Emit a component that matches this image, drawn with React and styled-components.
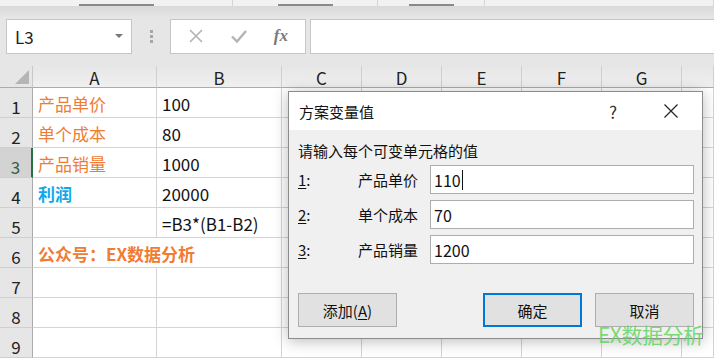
import React from 'react';
import styled, { createGlobalStyle } from 'styled-components';

const GlobalStyle = createGlobalStyle`
  html, body {
    margin: 0;
    padding: 0;
    background: #ffffff;
  }
  body {
    font-family: "Noto Sans CJK SC", "Noto Sans", sans-serif;
  }
`;

const Page = styled.div`
  position: relative;
  width: 714px;
  height: 358px;
  overflow: hidden;
  background: #ffffff;
  display: flex;
  flex-direction: column;
`;

const Ribbon = styled.div`
  height: 6px;
  background: #f3f2f1;
  display: flex;
`;

const RibbonGroup = styled.div`
  width: ${({ w }) => w}px;
  flex: none;
  display: flex;
  justify-content: center;
  align-items: flex-end;
  border-right: 1px solid #d6d6d6;
  box-sizing: border-box;
  span {
    width: ${({ bar }) => bar}px;
    height: 2px;
    background: #8a8a8a;
  }
`;

const FormulaBar = styled.div`
  height: 61px;
  box-sizing: border-box;
  background: linear-gradient(#d9d9d9, #e6e6e6 12px, #e6e6e6);
  padding: 13px 0 0 6px;
  display: flex;
  align-items: flex-start;
`;

const NameBox = styled.div`
  width: 126px;
  height: 35px;
  box-sizing: border-box;
  background: #fff;
  border: 1px solid #c6c6c6;
  display: flex;
  align-items: center;
  justify-content: space-between;
  padding: 0 8px 0 8px;
  font-size: 17px;
  color: #222;
`;

const Caret = styled.span`
  width: 0;
  height: 0;
  border-left: 4px solid transparent;
  border-right: 4px solid transparent;
  border-top: 4px solid #777;
`;

const Dots = styled.div`
  width: 38px;
  height: 35px;
  display: flex;
  flex-direction: column;
  align-items: center;
  justify-content: center;
  gap: 2px;
  span {
    width: 3px;
    height: 3px;
    background: #a6a6a6;
  }
`;

const FxBox = styled.div`
  width: 136px;
  height: 35px;
  box-sizing: border-box;
  background: #fff;
  border: 1px solid #c6c6c6;
  display: flex;
  align-items: center;
  justify-content: space-around;
  padding: 0 4px;
  color: #b0b0b0;
`;

const FxText = styled.span`
  font-family: "Liberation Serif", serif;
  font-style: italic;
  font-weight: bold;
  font-size: 17px;
  color: #7a7a7a;
`;

const FormulaInput = styled.div`
  flex: 1;
  margin-left: 4px;
  height: 35px;
  box-sizing: border-box;
  background: #fff;
  border: 1px solid #c6c6c6;
  border-right: none;
`;

const Sheet = styled.div`
  display: grid;
  grid-template-columns: 33px 124px 125px 80px 80px 80px 80px 80px 32px;
  grid-template-rows: 22px repeat(9, 30px);
`;

const Corner = styled.div`
  background: #e6e6e6;
  border-right: 1px solid #c8c8c8;
  border-bottom: 1px solid #ababab;
  position: relative;
  &::after {
    content: '';
    position: absolute;
    right: 3px;
    bottom: 3px;
    border-left: 14px solid transparent;
    border-bottom: 14px solid #b5b5b5;
  }
`;

const ColHead = styled.div`
  background: linear-gradient(#e6e6e6, #f0f0f0);
  border-right: 1px solid #cfcfcf;
  border-bottom: 1px solid #ababab;
  display: flex;
  align-items: center;
  justify-content: center;
  padding-top: 3px;
  font-size: 17px;
  line-height: 18px;
  color: #222;
`;

const RowHead = styled.div`
  background: ${({ active }) => (active ? '#d3d3d3' : '#e6e6e6')};
  border-right: ${({ active }) => (active ? '2px solid #217346' : '1px solid #ababab')};
  border-bottom: 1px solid #cfcfcf;
  display: flex;
  align-items: flex-end;
  justify-content: center;
  padding-bottom: 2px;
  font-size: 17px;
  line-height: 16px;
  color: ${({ active }) => (active ? '#3b5b48' : '#222')};
`;

const Cell = styled.div`
  grid-column: span ${({ span }) => span || 1};
  border-right: 1px solid #d4d4d4;
  border-bottom: 1px solid #d4d4d4;
  display: flex;
  align-items: center;
  padding: 2px 0 0 5px;
  font-size: 17px;
  white-space: nowrap;
  overflow: visible;
  color: ${({ tone }) =>
    tone === 'orange' ? '#f07c33' : tone === 'blue' ? '#11a8e8' : '#111'};
  font-weight: ${({ bold }) => (bold ? 700 : 400)};
`;

const Dialog = styled.div`
  position: absolute;
  left: 288px;
  top: 91px;
  width: 415px;
  height: 248px;
  box-sizing: border-box;
  border: 1px solid #8c8c8c;
  background: #f0f0f0;
  box-shadow: 0 2px 14px rgba(0, 0, 0, 0.28);
  display: flex;
  flex-direction: column;
`;

const TitleBar = styled.div`
  height: 38px;
  flex: none;
  background: #fff;
  display: flex;
  align-items: center;
  padding-left: 10px;
  font-size: 15px;
  color: #111;
`;

const TitleText = styled.div`
  flex: 1;
`;

const TitleButton = styled.div`
  width: ${({ w }) => w}px;
  display: flex;
  justify-content: center;
  font-size: 17px;
  color: #333;
`;

const Body = styled.div`
  flex: 1;
  padding: 10px 8px 10px 9px;
  display: flex;
  flex-direction: column;
`;

const Prompt = styled.div`
  font-size: 15px;
  line-height: 22px;
  color: #111;
  margin-bottom: 3px;
`;

const Fields = styled.div`
  display: flex;
  flex-direction: column;
  gap: 6px;
`;

const FieldRow = styled.div`
  display: flex;
  align-items: center;
  font-size: 15px;
  color: #111;
`;

const FieldNum = styled.div`
  width: 60px;
  u {
    text-decoration: underline;
    text-underline-offset: 2px;
  }
`;

const FieldLabel = styled.div`
  width: 60px;
  margin-right: 12px;
  text-align: right;
  white-space: nowrap;
`;

const FieldInput = styled.div`
  width: 264px;
  height: 29px;
  box-sizing: border-box;
  background: #fff;
  border: 1px solid #adadad;
  display: flex;
  align-items: center;
  padding-left: 3px;
  font-size: 16px;
  color: #111;
`;

const Cursor = styled.span`
  display: inline-block;
  width: 1px;
  height: 20px;
  background: #111;
  margin-left: 1px;
`;

const Buttons = styled.div`
  margin-top: auto;
  margin-bottom: 1px;
  display: flex;
  align-items: center;
`;

const Button = styled.div`
  width: 99px;
  height: 34px;
  box-sizing: border-box;
  margin-left: ${({ gap }) => gap || 0}px;
  background: #e1e1e1;
  border: ${({ primary }) => (primary ? '2px solid #0078d7' : '1px solid #adadad')};
  display: flex;
  align-items: center;
  justify-content: center;
  font-size: 15px;
  color: #111;
  u {
    text-decoration: underline;
    text-underline-offset: 2px;
  }
`;

const Watermark = styled.div`
  position: absolute;
  left: 598px;
  top: 320px;
  font-size: 21px;
  line-height: 28px;
  color: rgba(96, 214, 96, 0.85);
  letter-spacing: -0.5px;
`;

const columns = ['A', 'B', 'C', 'D', 'E', 'F', 'G', ''];

const rows = [
  [{ text: '产品单价', tone: 'orange' }, { text: '100' }],
  [{ text: '单个成本', tone: 'orange' }, { text: '80' }],
  [{ text: '产品销量', tone: 'orange' }, { text: '1000' }],
  [{ text: '利润', tone: 'blue', bold: true }, { text: '20000' }],
  [{ text: '' }, { text: '=B3*(B1-B2)' }],
  [{ text: '公众号：EX数据分析', tone: 'orange', bold: true, span: 2 }],
  [{ text: '' }, { text: '' }],
  [{ text: '' }, { text: '' }],
  [{ text: '' }, { text: '' }],
];

const fields = [
  { n: '1', label: '产品单价', value: '110', focus: true },
  { n: '2', label: '单个成本', value: '70' },
  { n: '3', label: '产品销量', value: '1200' },
];

const App = () => {
  return (
    <Page>
      <GlobalStyle />
      <Ribbon>
        <RibbonGroup w={233} bar={75}><span /></RibbonGroup>
        <RibbonGroup w={145} bar={55}><span /></RibbonGroup>
        <RibbonGroup w={107} bar={45}><span /></RibbonGroup>
        <RibbonGroup w={229} bar={0}><span /></RibbonGroup>
      </Ribbon>
      <FormulaBar>
        <NameBox>
          L3
          <Caret />
        </NameBox>
        <Dots>
          <span />
          <span />
          <span />
        </Dots>
        <FxBox>
          <svg width="16" height="16" viewBox="0 0 16 16">
            <path d="M2 2 L14 14 M14 2 L2 14" stroke="#b3b3b3" strokeWidth="1.6" fill="none" />
          </svg>
          <svg width="18" height="16" viewBox="0 0 18 16">
            <path d="M2 8.5 L7 13.5 L16 3" stroke="#b3b3b3" strokeWidth="2.4" fill="none" />
          </svg>
          <FxText>fx</FxText>
        </FxBox>
        <FormulaInput />
      </FormulaBar>
      <Sheet>
        <Corner />
        {columns.map((c, i) => (
          <ColHead key={i}>{c}</ColHead>
        ))}
        {rows.map((r, i) => (
          <React.Fragment key={i}>
            <RowHead active={i === 2}>{i + 1}</RowHead>
            {r.map((cell, j) => (
              <Cell key={j} tone={cell.tone} bold={cell.bold} span={cell.span}>
                {cell.text}
              </Cell>
            ))}
            {columns.slice(2).map((c, j) => (
              <Cell key={'e' + j} />
            ))}
          </React.Fragment>
        ))}
      </Sheet>

      <Dialog>
        <TitleBar>
          <TitleText>方案变量值</TitleText>
          <TitleButton w={54}>?</TitleButton>
          <TitleButton w={62}>
            <svg width="16" height="16" viewBox="0 0 16 16">
              <path d="M1.5 1.5 L14.5 14.5 M14.5 1.5 L1.5 14.5" stroke="#222" strokeWidth="1.2" fill="none" />
            </svg>
          </TitleButton>
        </TitleBar>
        <Body>
          <Prompt>请输入每个可变单元格的值</Prompt>
          <Fields>
            {fields.map((f) => (
              <FieldRow key={f.n}>
                <FieldNum>
                  <u>{f.n}</u>:
                </FieldNum>
                <FieldLabel>{f.label}</FieldLabel>
                <FieldInput>
                  {f.value}
                  {f.focus && <Cursor />}
                </FieldInput>
              </FieldRow>
            ))}
          </Fields>
          <Buttons>
            <Button>
              添加(<u>A</u>)
            </Button>
            <Button primary gap={86}>确定</Button>
            <Button gap={13}>取消</Button>
          </Buttons>
        </Body>
      </Dialog>
      <Watermark>EX数据分析</Watermark>
    </Page>
  );
};

export default App;
